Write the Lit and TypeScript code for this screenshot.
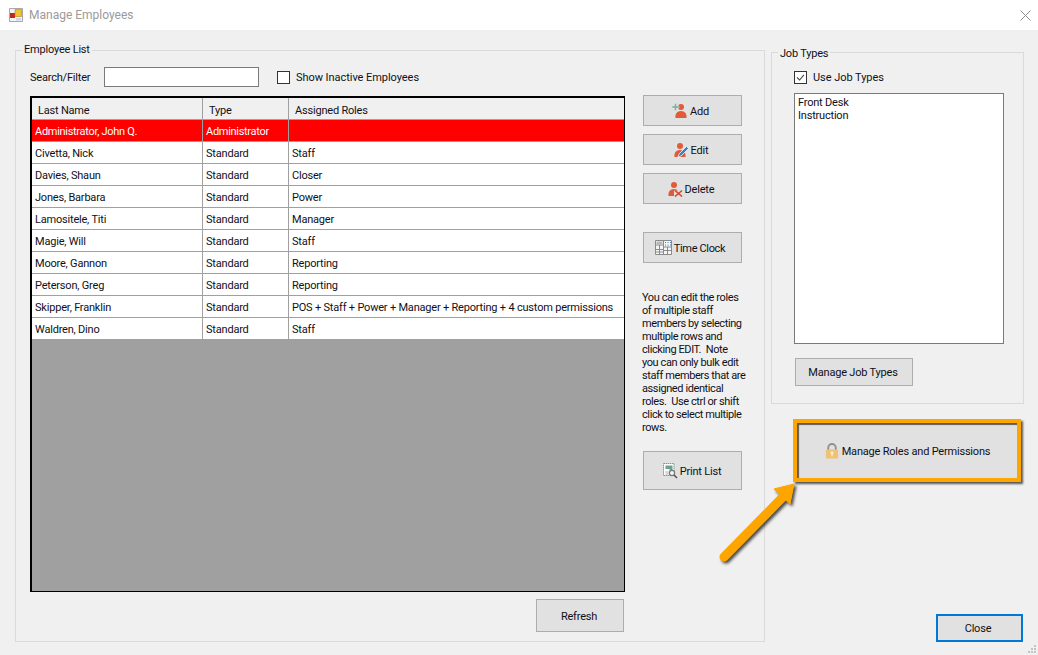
import { LitElement, html, css, svg } from "lit";
import { customElement } from "lit/decorators.js";

const ROWS: [string, string, string][] = [
  ["Civetta, Nick", "Standard", "Staff"],
  ["Davies, Shaun", "Standard", "Closer"],
  ["Jones, Barbara", "Standard", "Power"],
  ["Lamositele, Titi", "Standard", "Manager"],
  ["Magie, Will", "Standard", "Staff"],
  ["Moore, Gannon", "Standard", "Reporting"],
  ["Peterson, Greg", "Standard", "Reporting"],
  ["Skipper, Franklin", "Standard", "POS + Staff + Power + Manager + Reporting + 4 custom permissions"],
  ["Waldren, Dino", "Standard", "Staff"],
];

const person = (dx: number) => svg`
  <circle cx="${7 + dx}" cy="4" r="3" fill="#e05b37"/>
  <path d="M${1.5 + dx} 15c-.6-4 1.500-7 5.500-7s6 3 5.500 7z" fill="#e05b37"/>`;

const ICONS = {
  add: html`<svg class="ic" viewBox="0 0 16 16">
    ${person(2)}
    <path d="M2.5 0.5h2v2.5h2.500v2h-2.500v2.500h-2v-2.500h-2.500v-2h2.500z" fill="#7fb09f" stroke="#f0f0f0" stroke-width=".4"/>
  </svg>`,
  edit: html`<svg class="ic" viewBox="0 0 16 16">
    ${person(0)}
    <path d="M5 15l1-3 7.500-7.500 2 2-7.500 7.500z" fill="#3f7fc4" stroke="#eef2f6" stroke-width=".8"/>
  </svg>`,
  del: html`<svg class="ic" viewBox="0 0 16 16">
    ${person(0)}
    <path d="M7 9.500h9v6.500h-9z" fill="#e1e1e1"/>
    <path d="M8 9.500l7 6M15 9.500l-7 6" stroke="#d8452c" stroke-width="1.600" fill="none"/>
  </svg>`,
  clock: html`<svg class="ic wide" viewBox="0 0 17 15">
    <path d="M.5.5h16v14h-16z" fill="#f6f6f6" stroke="#8a8a8a"/>
    <path d="M.5 5h8M.5 9.500h8M.5 12h8M4.500 5v9M8.500.5v14M8.500 7h8M12.500 7v7M8.500 10.500h8" stroke="#8a8a8a" fill="none"/>
    <path d="M1.500 1.500h6v3h-6z" fill="#b8b8b8"/>
    <path d="M10 2h1v1h-1zM12.500 2h1v1h-1zM15 2h1v1h-1zM10 4.500h1v1h-1zM12.500 4.500h1v1h-1zM15 4.500h1v1h-1z" fill="#3f7fc4"/>
  </svg>`,
  print: html`<svg class="ic" viewBox="0 0 16 16">
    <path d="M1.500.5h10.500v12h-10.500z" fill="#fdfdfd" stroke="#6f9f8f" stroke-dasharray="1.500 .6"/>
    <path d="M3.500 2.500h7v5h-3v-1.500h-4z" fill="#6f9f8f"/>
    <path d="M3.500 9h3M3.500 11h3" stroke="#9ab8ae"/>
    <circle cx="10" cy="10" r="2.600" fill="#f4f4f4" stroke="#777" stroke-width="1.200"/>
    <path d="M12 12l3 3" stroke="#555" stroke-width="1.600"/>
  </svg>`,
  lock: html`<svg class="ic" viewBox="0 0 14 17">
    <path d="M3 8V5a4 4 0 0 1 8 0v3" fill="none" stroke="#8f8f8f" stroke-width="2"/>
    <rect x=".5" y="7" width="13" height="9.500" rx="1" fill="#f0c276"/>
    <circle cx="7" cy="10.500" r="1.500" fill="#fff3dc"/>
    <path d="M6.400 11h1.200v3h-1.200z" fill="#fff3dc"/>
  </svg>`,
};

@customElement("app-root")
export class AppRoot extends LitElement {
  static styles = css`
    :host {
      display: block;
      position: relative;
      width: 1038px;
      height: 655px;
      overflow: hidden;
      background: #f0f0f0;
      color: #101018;
      font: 11px/16px Roboto, "Liberation Sans", sans-serif;
      letter-spacing: -0.2px;
    }
    .titlebar {
      height: 30px;
      background: #fff;
      display: flex;
      align-items: center;
      padding: 0 7px 0 9px;
      gap: 6px;
      color: #9b9b9b;
      font-size: 12px;
      letter-spacing: 0;
    }
    .titlebar .name { flex: 1; }
    .appicon { width: 14px; height: 14px; }
    .x { width: 11px; height: 11px; }
    .main {
      display: flex;
      height: 612px;
      box-sizing: border-box;
      padding: 12px 14px 0 15px;
      gap: 6px;
    }
    fieldset {
      margin: 0;
      min-width: 0;
      box-sizing: border-box;
      border: 1px solid #dadada;
      display: block;
    }
    legend { padding: 0 2px; line-height: 16px; }
    .employees {
      width: 750px;
      height: 600px;
      padding: 9px 0 0 14px;
    }
    .employees legend { margin-left: -8px; }
    .search { display: flex; align-items: center; height: 20px; }
    .search .lbl { width: 74px; padding-top: 2px; }
    .t { padding-top: 2px; letter-spacing: -0.05px; }
    input[type="text"] {
      width: 155px;
      height: 20px;
      box-sizing: border-box;
      border: 1px solid #7a7a7a;
      background: #fff;
      margin: 0;
      padding: 0;
    }
    .check { display: flex; align-items: center; gap: 6px; }
    .search .check { margin-left: 18px; }
    .box {
      width: 13px;
      height: 13px;
      box-sizing: border-box;
      border: 1px solid #333;
      background: #fff;
      display: block;
    }
    .body { display: flex; gap: 18px; margin-top: 9px; }
    .tablecol { width: 595px; display: flex; flex-direction: column; }
    .table {
      width: 595px;
      height: 496px;
      box-sizing: border-box;
      border: 2px solid #000;
      border-width: 2px 1.500px 1.500px 2px;
      background: #a0a0a0;
    }
    .row {
      display: grid;
      grid-template-columns: 171px 86px 1fr;
      height: 22px;
      box-sizing: border-box;
      border-bottom: 1px solid #a0a0a0;
      background: #fff;
      line-height: 21px;
    }
    .row > div {
      padding: 1px 0 0 3px;
      border-right: 1px solid #a0a0a0;
      white-space: nowrap;
      overflow: hidden;
    }
    .row > div:last-child { border-right: 0; }
    .row.head { background: #f0f0f0; }
    .row.head > div { padding: 4px 0 0 6px; line-height: 17px; }
    .row.sel { background: #ff0000; color: #fff; letter-spacing: -0.3px; }
    .btn {
      box-sizing: border-box;
      border: 1.500px solid #adadad;
      background: #e1e1e1;
      display: flex;
      align-items: center;
      justify-content: center;
      gap: 2px;
      padding: 2px 2px 0 0;
      margin: 0;
      font: inherit;
      color: inherit;
      letter-spacing: inherit;
    }
    .ic { width: 16px; height: 16px; flex: none; margin-top: -2px; }
    .ic.wide { width: 17px; height: 15px; }
    .refresh {
      width: 88px;
      height: 33px;
      margin: 7px 1px 0 auto;
    }
    .side {
      width: 99px;
      margin-top: -1px;
      display: flex;
      flex-direction: column;
    }
    .side .btn { height: 31px; flex: none; padding-right: 4px; }
    .side .btn + .btn { margin-top: 8px; }
    .side .btn.apart { margin-top: 28px; padding-right: 5px; letter-spacing: -0.35px; }
    .note {
      margin: 28px 0 17px -1px;
      width: 106px;
      line-height: 13px;
      white-space: nowrap;
      letter-spacing: -0.4px;
    }
    .side .btn.print { height: 39px; margin-top: 0; padding-right: 2px; }
    .rightcol {
      width: 253px;
      display: flex;
      flex-direction: column;
      padding-top: 2px;
    }
    .jobs {
      width: 253px;
      height: 360px;
      padding: 8px 0 0 22px;
    }
    .jobs legend { margin-left: -16px; position: relative; top: 2px; }
    .list {
      width: 210px;
      height: 251px;
      box-sizing: border-box;
      border: 1px solid #7a7a7a;
      background: #fff;
      margin-top: 7px;
      padding: 2px 3px;
      line-height: 13px;
    }
    .managejobs {
      width: 118px;
      height: 28px;
      margin: 14px 0 0 1px;
    }
    .highlight {
      width: 228px;
      height: 63px;
      margin: 15px 0 0 22px;
      border: 4px solid #ffa500;
      padding-right: 0;
      box-shadow: 2px 2px 2px rgba(0, 0, 0, 0.65), inset 2px 2px 1px rgba(0, 0, 0, 0.6);
    }
    .close {
      width: 87px;
      height: 28px;
      margin: auto 1px 0 auto;
      border: 2px solid #0078d7;
      padding-right: 3px;
    }
    .arrow {
      position: absolute;
      left: 712px;
      top: 476px;
      width: 95px;
      height: 95px;
      filter: drop-shadow(2px 2px 1.500px rgba(0, 0, 0, 0.7));
    }
    .grip {
      position: absolute;
      right: 1px;
      bottom: 1px;
      width: 9px;
      height: 9px;
    }
  `;

  render() {
    return html`
      <div class="titlebar">
        <svg class="appicon" viewBox="0 0 14 14">
          <path d="M.5 .5h13v13h-13z" fill="#f2f4f8" stroke="#a8a8a8"/>
          <path d="M1 5h5v5h-5z" fill="#c4261d"/>
          <path d="M6 1.500h6.500v7h-6.500z" fill="#f3c22f" stroke="#b08a20" stroke-width=".6"/>
          <path d="M7 10h5v2.500h-5z" fill="#cbd6ea"/>
        </svg>
        <span class="name">Manage Employees</span>
        <svg class="x" viewBox="0 0 11 11">
          <path d="M.5.5l10 10M10.500.5l-10 10" stroke="#8c8c8c" fill="none"/>
        </svg>
      </div>
      <div class="main">
        <fieldset class="employees">
          <legend>Employee List</legend>
          <div class="search">
            <span class="lbl">Search/Filter</span>
            <input type="text" />
            <label class="check"><span class="box"></span><span class="t">Show Inactive Employees</span></label>
          </div>
          <div class="body">
            <div class="tablecol">
              <div class="table">
                <div class="row head"><div>Last Name</div><div>Type</div><div>Assigned Roles</div></div>
                <div class="row sel"><div>Administrator, John Q.</div><div>Administrator</div><div></div></div>
                ${ROWS.map((r) => html`<div class="row"><div>${r[0]}</div><div>${r[1]}</div><div>${r[2]}</div></div>`)}
              </div>
              <button class="btn refresh">Refresh</button>
            </div>
            <div class="side">
              <button class="btn">${ICONS.add}Add</button>
              <button class="btn">${ICONS.edit}Edit</button>
              <button class="btn">${ICONS.del}Delete</button>
              <button class="btn apart">${ICONS.clock}Time Clock</button>
              <div class="note">
                You can edit the roles<br />of multiple staff<br />members by selecting<br />multiple rows and<br />clicking EDIT.&nbsp; Note<br />you can only bulk edit<br />staff members that are<br />assigned identical<br />roles.&nbsp; Use ctrl or shift<br />click to select multiple<br />rows.
              </div>
              <button class="btn print">${ICONS.print}Print List</button>
            </div>
          </div>
        </fieldset>
        <div class="rightcol">
          <fieldset class="jobs">
            <legend>Job Types</legend>
            <label class="check">
              <svg class="box" viewBox="0 0 13 13"><path d="M2.500 6.500l3 3 5-6" fill="none" stroke="#444" stroke-width="1.300"/></svg>
              <span class="t">Use Job Types</span>
            </label>
            <div class="list">Front Desk<br />Instruction</div>
            <button class="btn managejobs">Manage Job Types</button>
          </fieldset>
          <button class="btn highlight">${ICONS.lock}Manage Roles and Permissions</button>
          <button class="btn close">Close</button>
        </div>
      </div>
      <svg class="arrow" viewBox="0 0 95 95">
        <path d="M12 81L70 22" stroke="#ffa500" stroke-width="9" stroke-linecap="round" fill="none"/>
        <path d="M82 8L62 13L78 28z" fill="#ffa500" stroke="#ffa500" stroke-width="1" stroke-linejoin="round"/>
      </svg>
      <svg class="grip" viewBox="0 0 9 9">
        <path d="M6 0h2v2h-2zM3 3h2v2h-2zM6 3h2v2h-2zM0 6h2v2h-2zM3 6h2v2h-2zM6 6h2v2h-2z" fill="#c4c4c4"/>
      </svg>
    `;
  }
}
